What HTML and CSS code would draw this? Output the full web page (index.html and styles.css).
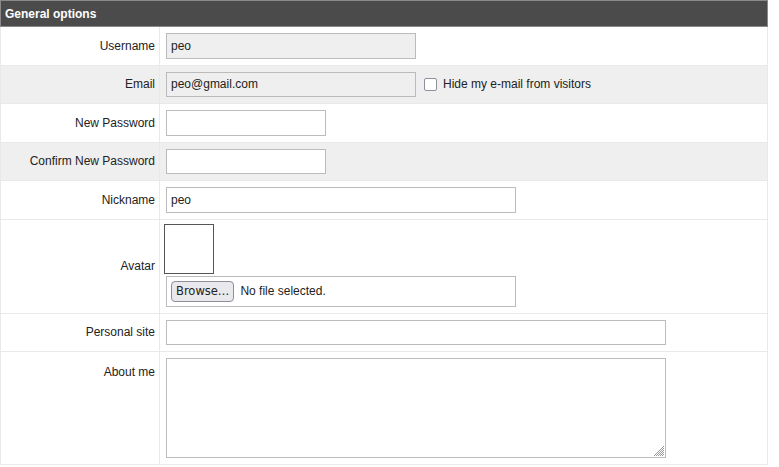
FILE: index.html
```html
<!DOCTYPE html>
<html>
<head>
<meta charset="utf-8">
<link rel="stylesheet" href="styles.css">
</head>
<body>
<table class="form">
  <tr class="form-head"><th colspan="2">General options</th></tr>
  <tr>
    <td class="label">Username</td>
    <td><input class="field readonly w250" type="text" value="peo" readonly></td>
  </tr>
  <tr class="alt">
    <td class="label">Email</td>
    <td>
      <div class="inline">
        <input class="field readonly w250" type="text" value="peo@gmail.com" readonly>
        <input class="check" type="checkbox" id="hide">
        <label for="hide" class="check-label">Hide my e-mail from visitors</label>
      </div>
    </td>
  </tr>
  <tr>
    <td class="label">New Password</td>
    <td><input class="field w160" type="password"></td>
  </tr>
  <tr class="alt">
    <td class="label">Confirm New Password</td>
    <td><input class="field w160" type="password"></td>
  </tr>
  <tr>
    <td class="label">Nickname</td>
    <td><input class="field w350" type="text" value="peo"></td>
  </tr>
  <tr>
    <td class="label">Avatar</td>
    <td>
      <div class="avatar"></div>
      <div class="file">
        <button class="browse" type="button">Browse…</button>
        <span class="file-name">No file selected.</span>
      </div>
    </td>
  </tr>
  <tr>
    <td class="label">Personal site</td>
    <td><input class="field w500" type="text"></td>
  </tr>
  <tr>
    <td class="label top">About me</td>
    <td>
      <div class="area-wrap">
        <textarea class="area"></textarea>
        <svg class="grip" width="10" height="10" viewBox="0 0 10 10">
          <g stroke="#9a9a9a" stroke-width="1">
            <line x1="10" y1="0" x2="0" y2="10"/>
            <line x1="10" y1="2" x2="2" y2="10"/>
            <line x1="10" y1="4" x2="4" y2="10"/>
            <line x1="10" y1="6" x2="6" y2="10"/>
            <line x1="10" y1="8" x2="8" y2="10"/>
          </g>
        </svg>
      </div>
    </td>
  </tr>
</table>
</body>
</html>
```
FILE: styles.css
```css
body {
  margin: 0;
  font-family: "Liberation Sans", Arial, sans-serif;
  font-size: 12px;
  color: #222;
  background: #fff;
}

.form {
  width: 768px;
  border-collapse: collapse;
}

.form-head th {
  background: #4b4b4b;
  color: #fff;
  border: 1px solid #8a8a8a;
  text-align: left;
  font-weight: bold;
  height: 26px;
  padding: 0 4px;
  box-sizing: border-box;
}

.form td {
  border: 1px solid #e9e9e9;
  padding: 4px;
  vertical-align: middle;
}

.form td.label {
  width: 150px;
  text-align: right;
}

.form td.top {
  vertical-align: top;
  padding-top: 13px;
}

.alt {
  background: #efefef;
}

.field {
  display: block;
  box-sizing: border-box;
  height: 25.5px;
  margin: 2px;
  padding: 0 4px;
  border: 1px solid #bbb;
  background: #fff;
  font: inherit;
  color: #222;
  outline: none;
}

.readonly {
  background: #efefef;
}

.w160 { width: 160px; }
.w250 { width: 250px; }
.w350 { width: 350px; }
.w500 { width: 500px; }

.inline {
  display: flex;
  align-items: center;
}

.check {
  appearance: none;
  -webkit-appearance: none;
  width: 13px;
  height: 13px;
  margin: 0 6px 0 6px;
  border: 1px solid #8f8f9d;
  border-radius: 2px;
  background: #fff;
  box-sizing: border-box;
}

.check-label {
  color: #222;
}

.avatar {
  width: 50px;
  height: 50px;
  box-sizing: border-box;
  border: 1px solid #555;
}

.file {
  box-sizing: border-box;
  width: 350px;
  height: 31px;
  margin: 2px;
  border: 1px solid #bbb;
  display: flex;
  align-items: center;
  padding: 0 4px;
}

.browse {
  height: 21px;
  padding: 0 4px;
  margin: 0 6px 0 0;
  border: 1px solid #8f8f9d;
  border-radius: 4px;
  background: #e9e9ed;
  font-family: "DejaVu Sans", sans-serif;
  font-size: 11.5px;
  color: #222;
}

.file-name {
  color: #222;
}

.area-wrap {
  position: relative;
  width: 500px;
  height: 100px;
  margin: 2px;
}

.area {
  display: block;
  box-sizing: border-box;
  width: 500px;
  height: 100px;
  margin: 0;
  border: 1px solid #bbb;
  resize: none;
  font: inherit;
  outline: none;
}

.grip {
  position: absolute;
  right: 2px;
  bottom: 2px;
}
```
